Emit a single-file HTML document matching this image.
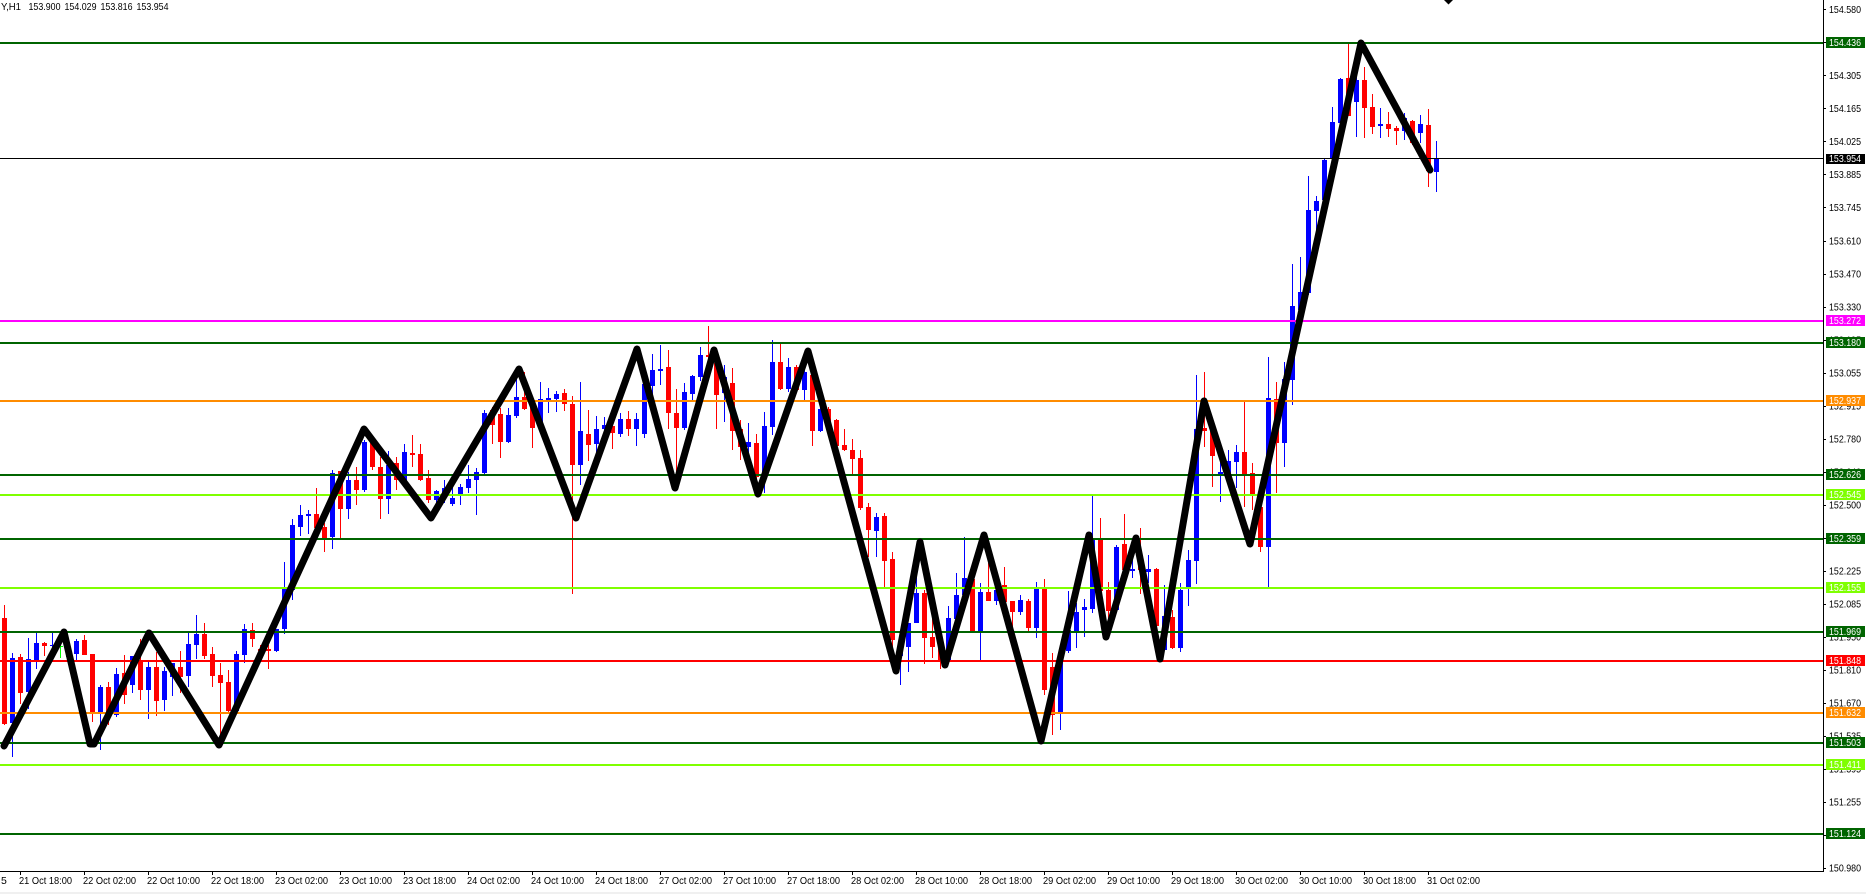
<!DOCTYPE html>
<html><head><meta charset="utf-8"><title>Chart</title>
<style>
html,body{margin:0;padding:0;background:#fff;width:1866px;height:894px;overflow:hidden}
svg{display:block}
text{font-family:"Liberation Sans",sans-serif;font-size:10.5px;fill:#000}
.w text{fill:#fff}
</style></head><body>
<svg width="1866" height="894" viewBox="0 0 1866 894" xmlns="http://www.w3.org/2000/svg">
<rect width="1866" height="894" fill="#fff"/>
<rect x="0" y="892" width="1866" height="2" fill="#f0f0f0"/>
<g fill="none" shape-rendering="crispEdges">
<path stroke="#f00" stroke-width="1" d="M4.5 605V725M20.5 654V704M44.5 642V656M84.5 635V654M92.5 654V722M108.5 682V725M124.5 655V704M140.5 639V700M156.5 652V716M180.5 651V693M204.5 623V659M212.5 647V687M220.5 663V743M228.5 670V713M252.5 623V647M260.5 645V655M268.5 645V669M316.5 488V530M324.5 523V552M340.5 471V538M356.5 467V505M372.5 440V470M380.5 457V519M396.5 457V490M412.5 435V467M420.5 444V481M428.5 470V503M492.5 407V444M500.5 408V458M524.5 372V410M532.5 400V448M564.5 389V411M572.5 396V594M588.5 410V461M612.5 420V449M628.5 411V436M668.5 350V429M676.5 389V486M708.5 326V360M716.5 360V429M732.5 368V450M740.5 420V460M756.5 434V483M780.5 343V390M796.5 365V390M812.5 370V446M828.5 407V430M836.5 419V453M844.5 429V451M852.5 439V474M860.5 450V510M868.5 503V557M884.5 513V587M892.5 552V650M924.5 590V664M932.5 607V658M940.5 645V669M972.5 578V631M988.5 563V601M1004.5 567V602M1012.5 601V627M1028.5 599V631M1044.5 579V695M1052.5 653V735M1100.5 518V620M1108.5 582V620M1124.5 514V575M1140.5 528V594M1156.5 568V626M1172.5 610V649M1204.5 372V447M1212.5 430V487M1244.5 402V507M1252.5 463V510M1260.5 500V552M1276.5 382V493M1348.5 43V116M1364.5 67V138M1372.5 94V134M1388.5 112V137M1396.5 126V145M1412.5 120V145M1428.5 109V187"/>
<path stroke="#f00" stroke-width="5" d="M4.5 618V724M20.5 657V693M44.5 643V646M84.5 640V655M92.5 654V712M108.5 687V715M124.5 673V695M140.5 660V690M156.5 667V701M180.5 667V677M204.5 634V656M212.5 654V676M220.5 675V683M228.5 682V711M252.5 630V639M260.5 649V651M268.5 649V651M316.5 514V528M324.5 527V538M340.5 471V509M356.5 480V490M372.5 443V467M380.5 467V499M396.5 463V480M412.5 453V455M420.5 454V480M428.5 478V500M492.5 410V425M500.5 414V442M524.5 397V409M532.5 400V428M564.5 393V404M572.5 404V465M588.5 434V445M612.5 426V433M628.5 419V429M668.5 367V413M676.5 413V428M708.5 355V357M716.5 363V395M732.5 383V431M740.5 429V447M756.5 443V477M780.5 362V389M796.5 367V390M812.5 375V431M828.5 409V427M836.5 420V446M844.5 445V450M852.5 450V459M860.5 458V508M868.5 507V530M884.5 516V561M892.5 559V640M924.5 593V638M932.5 637V647M940.5 645V660M972.5 579V631M988.5 592V601M1004.5 585V602M1012.5 601V612M1028.5 601V628M1044.5 589V690M1052.5 667V715M1100.5 540V591M1108.5 590V611M1124.5 544V570M1140.5 560V570M1156.5 569V626M1172.5 617V648M1204.5 428V431M1212.5 430V456M1244.5 452V474M1252.5 473V494M1260.5 507V547M1276.5 399V443M1348.5 78V116M1364.5 80V108M1372.5 107V127M1388.5 124V129M1396.5 128V131M1412.5 121V143M1428.5 125V171"/>
<path stroke="#00f" stroke-width="1" d="M12.5 653V757M28.5 638V709M36.5 633V669M52.5 633V647M68.5 640V660M76.5 639V660M100.5 685V750M116.5 668V717M132.5 656V693M148.5 662V719M164.5 667V711M172.5 663V696M188.5 633V687M196.5 615V659M236.5 651V713M244.5 624V663M276.5 629V652M284.5 562V634M292.5 519V600M300.5 505V536M308.5 510V534M332.5 470V549M348.5 472V519M364.5 440V492M388.5 451V514M404.5 444V488M436.5 490V503M444.5 480V503M452.5 485V506M460.5 484V505M468.5 465V493M476.5 468V515M484.5 410V474M508.5 408V443M516.5 373V418M540.5 382V430M548.5 388V413M556.5 391V412M580.5 382V485M596.5 416V453M604.5 417V435M620.5 413V437M636.5 413V446M644.5 380V438M652.5 354V395M660.5 345V385M684.5 383V430M692.5 375V400M700.5 347V381M724.5 365V422M748.5 423V460M764.5 412V493M772.5 340V435M788.5 358V392M804.5 367V400M820.5 400V432M876.5 513V557M900.5 640V685M908.5 623V672M916.5 567V623M948.5 606V660M956.5 573V619M964.5 537V597M980.5 583V660M996.5 573V605M1020.5 595V615M1036.5 582V638M1060.5 660V730M1068.5 591V653M1076.5 603V648M1084.5 599V637M1092.5 496V613M1116.5 545V611M1132.5 540V578M1148.5 555V583M1164.5 585V650M1180.5 583V652M1188.5 550V606M1196.5 375V584M1220.5 460V502M1228.5 450V487M1236.5 445V488M1268.5 357V587M1284.5 362V467M1292.5 264V405M1300.5 257V325M1308.5 176V295M1316.5 196V233M1324.5 158V205M1332.5 107V165M1340.5 78V123M1356.5 70V137M1380.5 108V138M1404.5 113V140M1420.5 115V143M1436.5 141V192"/>
<path stroke="#00f" stroke-width="5" d="M12.5 658V723M28.5 659V692M36.5 643V660M52.5 645V646M68.5 648V657M76.5 641V654M100.5 687V714M116.5 674V715M132.5 656V685M148.5 667V690M164.5 671V700M172.5 663V677M188.5 644V676M196.5 634V645M236.5 654V711M244.5 629V655M276.5 629V651M284.5 589V629M292.5 525V590M300.5 515V527M308.5 514V516M332.5 473V537M348.5 480V509M364.5 442V490M388.5 465V499M404.5 452V483M436.5 491V500M444.5 488V497M452.5 498V504M460.5 487V494M468.5 479V488M476.5 472V480M484.5 413V473M508.5 415V442M516.5 397V416M540.5 399V425M548.5 398V400M556.5 394V399M580.5 431V465M596.5 429V444M604.5 425V429M620.5 419V434M636.5 419V429M644.5 384V434M652.5 370V386M660.5 369V371M684.5 392V428M692.5 376V394M700.5 355V377M724.5 377V393M748.5 442V447M764.5 426V477M772.5 362V427M788.5 367V389M804.5 372V390M820.5 409V431M876.5 517V531M900.5 647V656M908.5 623V647M916.5 593V623M948.5 618V660M956.5 595V619M964.5 578V595M980.5 592V631M996.5 590V601M1020.5 600V612M1036.5 589V628M1060.5 662V712M1068.5 630V651M1076.5 612V631M1084.5 607V610M1092.5 540V609M1116.5 547V610M1132.5 569V571M1148.5 569V572M1164.5 616V650M1180.5 590V648M1188.5 560V589M1196.5 429V561M1220.5 472V474M1228.5 461V480M1236.5 452V462M1268.5 398V547M1284.5 379V443M1292.5 306V380M1300.5 292V310M1308.5 210V293M1316.5 201V211M1324.5 160V200M1332.5 122V158M1340.5 79V123M1356.5 80V102M1380.5 124V126M1404.5 118V131M1420.5 124V133M1436.5 158V172"/>
<path stroke="#0f0" stroke-width="1" d="M60.5 645V658"/>
<path stroke="#0f0" stroke-width="5" d="M60.5 646V647"/>
</g>
<!-- price axis labels -->
<g>
<text x="1829" y="13" textLength="32" lengthAdjust="spacingAndGlyphs">154.580</text>
<text x="1829" y="46" textLength="32" lengthAdjust="spacingAndGlyphs">154.440</text>
<text x="1829" y="79" textLength="32" lengthAdjust="spacingAndGlyphs">154.305</text>
<text x="1829" y="112" textLength="32" lengthAdjust="spacingAndGlyphs">154.165</text>
<text x="1829" y="145" textLength="32" lengthAdjust="spacingAndGlyphs">154.025</text>
<text x="1829" y="178" textLength="32" lengthAdjust="spacingAndGlyphs">153.885</text>
<text x="1829" y="211" textLength="32" lengthAdjust="spacingAndGlyphs">153.745</text>
<text x="1829" y="244.5" textLength="32" lengthAdjust="spacingAndGlyphs">153.610</text>
<text x="1829" y="277.5" textLength="32" lengthAdjust="spacingAndGlyphs">153.470</text>
<text x="1829" y="310.5" textLength="32" lengthAdjust="spacingAndGlyphs">153.330</text>
<text x="1829" y="343.5" textLength="32" lengthAdjust="spacingAndGlyphs">153.195</text>
<text x="1829" y="376.5" textLength="32" lengthAdjust="spacingAndGlyphs">153.055</text>
<text x="1829" y="409.5" textLength="32" lengthAdjust="spacingAndGlyphs">152.915</text>
<text x="1829" y="442.5" textLength="32" lengthAdjust="spacingAndGlyphs">152.780</text>
<text x="1829" y="475.5" textLength="32" lengthAdjust="spacingAndGlyphs">152.640</text>
<text x="1829" y="508.5" textLength="32" lengthAdjust="spacingAndGlyphs">152.500</text>
<text x="1829" y="541.5" textLength="32" lengthAdjust="spacingAndGlyphs">152.360</text>
<text x="1829" y="574.5" textLength="32" lengthAdjust="spacingAndGlyphs">152.225</text>
<text x="1829" y="607.5" textLength="32" lengthAdjust="spacingAndGlyphs">152.085</text>
<text x="1829" y="640.5" textLength="32" lengthAdjust="spacingAndGlyphs">151.950</text>
<text x="1829" y="673.5" textLength="32" lengthAdjust="spacingAndGlyphs">151.810</text>
<text x="1829" y="706.5" textLength="32" lengthAdjust="spacingAndGlyphs">151.670</text>
<text x="1829" y="739.5" textLength="32" lengthAdjust="spacingAndGlyphs">151.535</text>
<text x="1829" y="772.5" textLength="32" lengthAdjust="spacingAndGlyphs">151.395</text>
<text x="1829" y="805.5" textLength="32" lengthAdjust="spacingAndGlyphs">151.255</text>
<text x="1829" y="838.5" textLength="32" lengthAdjust="spacingAndGlyphs">151.120</text>
<text x="1829" y="871.5" textLength="32" lengthAdjust="spacingAndGlyphs">150.980</text>
</g>
<path fill="none" stroke="#000" stroke-width="1" shape-rendering="crispEdges" d="M1824 9.5H1826M1824 42.5H1826M1824 75.5H1826M1824 108.5H1826M1824 141.5H1826M1824 174.5H1826M1824 207.5H1826M1824 241.5H1826M1824 274.5H1826M1824 307.5H1826M1824 340.5H1826M1824 373.5H1826M1824 406.5H1826M1824 439.5H1826M1824 472.5H1826M1824 505.5H1826M1824 538.5H1826M1824 571.5H1826M1824 604.5H1826M1824 637.5H1826M1824 670.5H1826M1824 703.5H1826M1824 736.5H1826M1824 769.5H1826M1824 802.5H1826M1824 835.5H1826M1824 868.5H1826"/>
<!-- levels -->
<g shape-rendering="crispEdges">
<rect x="0" y="42" width="1823" height="2" fill="#006400"/><rect x="1826" y="37" width="39" height="11" fill="#006400"/>
<rect x="0" y="158" width="1823" height="1" fill="#000"/><rect x="1826" y="154" width="39" height="10" fill="#000"/>
<rect x="0" y="320" width="1823" height="2" fill="#f0f"/><rect x="1826" y="315" width="39" height="11" fill="#f0f"/>
<rect x="0" y="342" width="1823" height="2" fill="#006400"/><rect x="1826" y="337" width="39" height="11" fill="#006400"/>
<rect x="0" y="400" width="1823" height="2" fill="#ff8c00"/><rect x="1826" y="395" width="39" height="11" fill="#ff8c00"/>
<rect x="0" y="474" width="1823" height="2" fill="#006400"/><rect x="1826" y="469" width="39" height="11" fill="#006400"/>
<rect x="0" y="494" width="1823" height="2" fill="#7fff00"/><rect x="1826" y="489" width="39" height="11" fill="#7fff00"/>
<rect x="0" y="538" width="1823" height="2" fill="#006400"/><rect x="1826" y="533" width="39" height="11" fill="#006400"/>
<rect x="0" y="587" width="1823" height="2" fill="#7fff00"/><rect x="1826" y="582" width="39" height="11" fill="#7fff00"/>
<rect x="0" y="631" width="1823" height="2" fill="#006400"/><rect x="1826" y="626" width="39" height="11" fill="#006400"/>
<rect x="0" y="660" width="1823" height="2" fill="#f00"/><rect x="1826" y="655" width="39" height="11" fill="#f00"/>
<rect x="0" y="712" width="1823" height="2" fill="#ff8c00"/><rect x="1826" y="707" width="39" height="11" fill="#ff8c00"/>
<rect x="0" y="742" width="1823" height="2" fill="#006400"/><rect x="1826" y="737" width="39" height="11" fill="#006400"/>
<rect x="0" y="764" width="1823" height="2" fill="#7fff00"/><rect x="1826" y="759" width="39" height="11" fill="#7fff00"/>
<rect x="0" y="833" width="1823" height="2" fill="#006400"/><rect x="1826" y="828" width="39" height="11" fill="#006400"/>
</g>
<g class="w">
<text x="1829" y="46" textLength="32" lengthAdjust="spacingAndGlyphs">154.436</text>
<text x="1829" y="162" textLength="32" lengthAdjust="spacingAndGlyphs">153.954</text>
<text x="1829" y="324" textLength="32" lengthAdjust="spacingAndGlyphs">153.272</text>
<text x="1829" y="346" textLength="32" lengthAdjust="spacingAndGlyphs">153.180</text>
<text x="1829" y="404" textLength="32" lengthAdjust="spacingAndGlyphs">152.937</text>
<text x="1829" y="478" textLength="32" lengthAdjust="spacingAndGlyphs">152.626</text>
<text x="1829" y="498" textLength="32" lengthAdjust="spacingAndGlyphs">152.545</text>
<text x="1829" y="542" textLength="32" lengthAdjust="spacingAndGlyphs">152.359</text>
<text x="1829" y="591" textLength="32" lengthAdjust="spacingAndGlyphs">152.155</text>
<text x="1829" y="635" textLength="32" lengthAdjust="spacingAndGlyphs">151.969</text>
<text x="1829" y="664" textLength="32" lengthAdjust="spacingAndGlyphs">151.848</text>
<text x="1829" y="716" textLength="32" lengthAdjust="spacingAndGlyphs">151.632</text>
<text x="1829" y="746" textLength="32" lengthAdjust="spacingAndGlyphs">151.503</text>
<text x="1829" y="768" textLength="32" lengthAdjust="spacingAndGlyphs">151.411</text>
<text x="1829" y="837" textLength="32" lengthAdjust="spacingAndGlyphs">151.124</text>
</g>
<!-- zigzag -->
<path fill="none" stroke="#000" stroke-width="7" stroke-linecap="round" stroke-linejoin="round" d="M4 746L64 632L90 744L94 744L149 633L219 745L364 429L431 518L519 369L576 518L637 349L675 488L714 350L758 494L808 351L896 671L920 542L945 665L984 535L1041 741L1089 535L1106 637L1136 538L1160 659L1204 401L1250 544L1361 43L1430 170"/>
<!-- axes -->
<g shape-rendering="crispEdges">
<rect x="1823" y="0" width="1" height="872" fill="#000"/>
<rect x="0" y="871" width="1824" height="1" fill="#000"/>
</g>
<path fill="none" stroke="#000" stroke-width="1" shape-rendering="crispEdges" d="M20.5 872V875M84.5 872V875M148.5 872V875M212.5 872V875M276.5 872V875M340.5 872V875M404.5 872V875M468.5 872V875M532.5 872V875M596.5 872V875M660.5 872V875M724.5 872V875M788.5 872V875M852.5 872V875M916.5 872V875M980.5 872V875M1044.5 872V875M1108.5 872V875M1172.5 872V875M1236.5 872V875M1300.5 872V875M1364.5 872V875M1428.5 872V875"/>
<g>
<text x="1" y="884">5</text>
<text x="19" y="884" textLength="53" lengthAdjust="spacingAndGlyphs">21 Oct 18:00</text>
<text x="83" y="884" textLength="53" lengthAdjust="spacingAndGlyphs">22 Oct 02:00</text>
<text x="147" y="884" textLength="53" lengthAdjust="spacingAndGlyphs">22 Oct 10:00</text>
<text x="211" y="884" textLength="53" lengthAdjust="spacingAndGlyphs">22 Oct 18:00</text>
<text x="275" y="884" textLength="53" lengthAdjust="spacingAndGlyphs">23 Oct 02:00</text>
<text x="339" y="884" textLength="53" lengthAdjust="spacingAndGlyphs">23 Oct 10:00</text>
<text x="403" y="884" textLength="53" lengthAdjust="spacingAndGlyphs">23 Oct 18:00</text>
<text x="467" y="884" textLength="53" lengthAdjust="spacingAndGlyphs">24 Oct 02:00</text>
<text x="531" y="884" textLength="53" lengthAdjust="spacingAndGlyphs">24 Oct 10:00</text>
<text x="595" y="884" textLength="53" lengthAdjust="spacingAndGlyphs">24 Oct 18:00</text>
<text x="659" y="884" textLength="53" lengthAdjust="spacingAndGlyphs">27 Oct 02:00</text>
<text x="723" y="884" textLength="53" lengthAdjust="spacingAndGlyphs">27 Oct 10:00</text>
<text x="787" y="884" textLength="53" lengthAdjust="spacingAndGlyphs">27 Oct 18:00</text>
<text x="851" y="884" textLength="53" lengthAdjust="spacingAndGlyphs">28 Oct 02:00</text>
<text x="915" y="884" textLength="53" lengthAdjust="spacingAndGlyphs">28 Oct 10:00</text>
<text x="979" y="884" textLength="53" lengthAdjust="spacingAndGlyphs">28 Oct 18:00</text>
<text x="1043" y="884" textLength="53" lengthAdjust="spacingAndGlyphs">29 Oct 02:00</text>
<text x="1107" y="884" textLength="53" lengthAdjust="spacingAndGlyphs">29 Oct 10:00</text>
<text x="1171" y="884" textLength="53" lengthAdjust="spacingAndGlyphs">29 Oct 18:00</text>
<text x="1235" y="884" textLength="53" lengthAdjust="spacingAndGlyphs">30 Oct 02:00</text>
<text x="1299" y="884" textLength="53" lengthAdjust="spacingAndGlyphs">30 Oct 10:00</text>
<text x="1363" y="884" textLength="53" lengthAdjust="spacingAndGlyphs">30 Oct 18:00</text>
<text x="1427" y="884" textLength="53" lengthAdjust="spacingAndGlyphs">31 Oct 02:00</text>
</g>
<!-- header -->
<text x="1" y="10" textLength="20" lengthAdjust="spacingAndGlyphs">Y,H1</text>
<text x="28.5" y="10" textLength="32" lengthAdjust="spacingAndGlyphs">153.900</text>
<text x="64.5" y="10" textLength="32" lengthAdjust="spacingAndGlyphs">154.029</text>
<text x="100.5" y="10" textLength="32" lengthAdjust="spacingAndGlyphs">153.816</text>
<text x="136.5" y="10" textLength="32" lengthAdjust="spacingAndGlyphs">153.954</text>
<path d="M1444 0H1453L1448.5 4.5Z" fill="#000"/>
</svg>
</body></html>
